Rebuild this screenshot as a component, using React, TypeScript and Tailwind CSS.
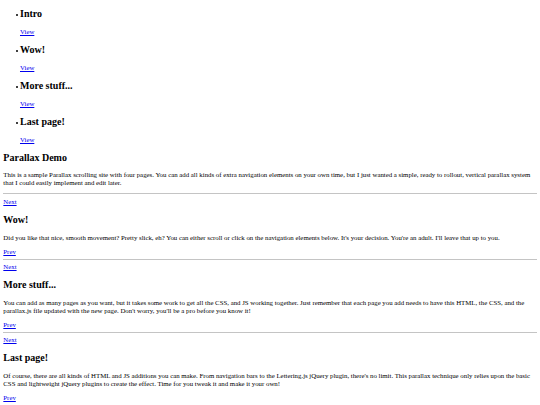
const navItems = ["Intro", "Wow!", "More stuff...", "Last page!"];

const pages = [
  {
    title: "Parallax Demo",
    text: "This is a sample Parallax scrolling site with four pages. You can add all kinds of extra navigation elements on your own time, but I just wanted a simple, ready to rollout, vertical parallax system that I could easily implement and edit later.",
  },
  {
    title: "Wow!",
    text: "Did you like that nice, smooth movement? Pretty slick, eh? You can either scroll or click on the navigation elements below. It's your decision. You're an adult. I'll leave that up to you.",
  },
  {
    title: "More stuff...",
    text: "You can add as many pages as you want, but it takes some work to get all the CSS, and JS working together. Just remember that each page you add needs to have this HTML, the CSS, and the parallax.js file updated with the new page. Don't worry, you'll be a pro before you know it!",
  },
  {
    title: "Last page!",
    text: "Of course, there are all kinds of HTML and JS additions you can make. From navigation bars to the Lettering.js jQuery plugin, there's no limit. This parallax technique only relies upon the basic CSS and lightweight jQuery plugins to create the effect. Time for you tweak it and make it your own!",
  },
];

const App = () => {
  return (
    <div className="min-h-[405px] bg-white px-[3.33px] font-['Liberation_Serif','Times_New_Roman',serif] text-[6.82px] leading-[7.67px] text-black">
      {/* nav list */}
      <ul className="my-[6.67px] pl-[16.67px]">
        {navItems.map((item) => (
          <li
            key={item}
            className="relative before:absolute before:left-[-3.5px] before:top-[6px] before:h-[2px] before:w-[2px] before:rounded-full before:bg-black before:content-['']"
          >
            <h2 className="my-[8.33px] text-[10px] font-bold leading-[11.5px]">{item}</h2>
            <a href="#" className="text-[#0000ee] underline">
              View
            </a>
          </li>
        ))}
      </ul>

      {/* pages */}
      {pages.map((page, i) => (
        <section key={page.title}>
          {i > 0 && (
            <div>
              <a href="#" className="text-[#0000ee] underline">
                Next
              </a>
            </div>
          )}
          <h2 className="my-[8.33px] text-[10px] font-bold leading-[11.5px]">{page.title}</h2>
          <p className="my-[6.67px]">{page.text}</p>
          {i > 0 && (
            <div>
              <a href="#" className="text-[#0000ee] underline">
                Prev
              </a>
            </div>
          )}
          <hr className="my-[3.33px] border-t border-[#c4c4c4]" />
        </section>
      ))}
    </div>
  );
};

export default App;
